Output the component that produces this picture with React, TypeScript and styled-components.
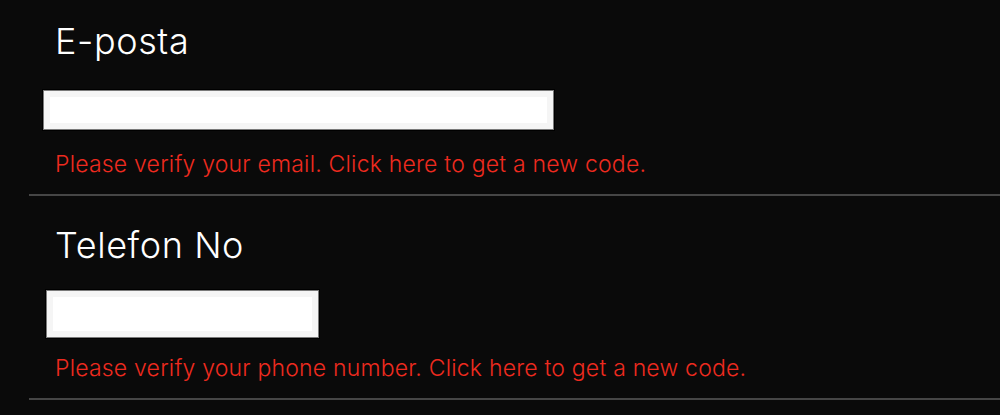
import React from 'react'
import styled, { createGlobalStyle } from 'styled-components'

const GlobalStyle = createGlobalStyle`
    html, body {
        margin: 0;
        padding: 0;
        background: #0a0a0a;
        font-family: Inter, "Noto Sans", sans-serif;
    }
`

const fields = [
    { label: 'E-posta', width: 511, height: 40, offset: 14, error: 'Please verify your email. Click here to get a new code.' },
    { label: 'Telefon No', width: 273, height: 48, offset: 17, error: 'Please verify your phone number. Click here to get a new code.' },
]

const App = () => {
    return (
        <>
            <GlobalStyle />
            <Page>
                {fields.map(field => (
                    <Section key={field.label}>
                        <Label>{field.label}</Label>
                        <InputSlot>
                            <Input type="text" $width={field.width} $height={field.height} $offset={field.offset} />
                        </InputSlot>
                        <ErrorText>{field.error}</ErrorText>
                    </Section>
                ))}
            </Page>
        </>
    )
}

export default App

const Page = styled.div`
    margin-top: -8px;
    padding-left: 29px;
    min-height: 423px;
    background: #0a0a0a;
`
const Section = styled.div`
    display: flex;
    flex-direction: column;
    padding: 29px 0 16px;
    border-bottom: 2px solid #464646;
`
const Label = styled.label`
    padding-left: 26px;
    height: 40px;
    font-size: 36px;
    line-height: 40px;
    font-weight: 300;
    letter-spacing: 0.6px;
    color: #ffffff;
`
const InputSlot = styled.div`
    display: flex;
    align-items: center;
    height: 48px;
    margin-top: 25px;
`
const Input = styled.input<{ $width: number; $height: number; $offset: number }>`
    box-sizing: border-box;
    width: ${p => p.$width}px;
    height: ${p => p.$height}px;
    margin: 0 0 0 ${p => p.$offset}px;
    padding: 0 10px;
    border: 1px solid #7a7a7a;
    border-radius: 0;
    background: #ffffff;
    box-shadow: inset 0 0 0 6px #f5f5f5, 0 0 0 1px #000000;
    outline: none;
`
const ErrorText = styled.div`
    margin-top: 16px;
    padding-left: 26px;
    height: 28px;
    font-size: 23px;
    line-height: 28px;
    font-weight: 300;
    letter-spacing: 0.2px;
    color: #ee2a1f;
`
